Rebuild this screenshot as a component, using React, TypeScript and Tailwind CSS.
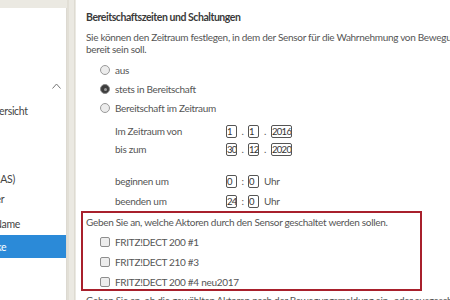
import React from "react";

const font = { fontFamily: "Lato, 'Noto Sans', sans-serif" };

function Radio({ checked }: { checked?: boolean }) {
  return checked ? (
    <span className="w-[10px] h-[10px] shrink-0 rounded-full bg-[#3d3d3d] border border-[#8a8a8a] flex items-center justify-center">
      <span className="w-[3px] h-[3px] rounded-full bg-[#9a9a9a]" />
    </span>
  ) : (
    <span className="w-[10px] h-[10px] shrink-0 rounded-full border border-[#9a9a9a] bg-[#ececec]" />
  );
}

function Check() {
  return <span className="w-[10px] h-[10px] shrink-0 rounded-[2px] border border-[#8e8e8e] bg-[#ededed]" />;
}

function Box({ v, w = "w-[11px]" }: { v: string; w?: string }) {
  return (
    <span className={`${w} h-[13px] shrink-0 overflow-hidden border border-[#555] rounded-[2px] text-[9.5px] leading-[11px] tracking-[-0.7px] text-[#333] bg-white`}>
      {v}
    </span>
  );
}

function Row({ label, children, mt }: { label: string; children: React.ReactNode; mt: string }) {
  return (
    <div className={`flex items-center h-[14px] ${mt}`}>
      <span className="w-[140px] shrink-0 pl-[29px] text-[#555]">{label}</span>
      <div className="flex items-center">{children}</div>
    </div>
  );
}

export default function App() {
  return (
    <div className="w-[450px] h-[300px] overflow-hidden bg-[#ebe9e2] flex text-[10px] leading-[12px] tracking-[-0.3px]" style={font}>
      {/* sidebar */}
      <div className="w-[66px] shrink-0 mt-[8px] bg-white overflow-hidden flex flex-col whitespace-nowrap text-[10.5px] text-[#444] shadow-[1px_0_0_#dcd9d1]">
        <div className="h-[75px] shrink-0" />
        <div className="h-[10px] shrink-0 flex justify-end pr-[5px]">
          <svg width="9" height="6" viewBox="0 0 9 6">
            <path d="M0.5 5.5 L4.5 1 L8.5 5.5" fill="none" stroke="#777" strokeWidth="1" />
          </svg>
        </div>
        <div className="h-[12px] shrink-0" />
        <div className="h-[12px] shrink-0 leading-[12px] ml-[-14px]">Übersicht</div>
        <div className="h-[56px] shrink-0" />
        <div className="h-[12px] shrink-0 leading-[12px] ml-[-10px]">(NAS)</div>
        <div className="h-[8px] shrink-0" />
        <div className="h-[12px] shrink-0 leading-[12px] ml-[-33px]">Speicher</div>
        <div className="h-[13px] shrink-0" />
        <div className="h-[12px] shrink-0 leading-[12px] ml-[-6px]">Name</div>
        <div className="h-[5px] shrink-0" />
        <div className="h-[23px] shrink-0 bg-[#2b8ad8] text-white flex items-center">
          <span className="ml-[-44px]">Regelwerke</span>
        </div>
      </div>
      <div className="w-[10px] shrink-0 flex">
        <div className="w-[2px] bg-[#e2dfd6] ml-[1px]" />
        <div className="w-[5px]" />
        <div className="w-[1px] bg-[#dedbd2]" />
      </div>
      {/* content */}
      <div className="flex-1 min-w-0 overflow-hidden bg-white pl-[10px] pt-[11px] whitespace-nowrap text-[#555]">
        <div className="font-bold text-[#3a3a3a] text-[10.5px] tracking-[-0.45px] h-[12px]">Bereitschaftszeiten und Schaltungen</div>
        <div className="mt-[8px]">Sie können den Zeitraum festlegen, in dem der Sensor für die Wahrnehmung von Bewegungen</div>
        <div>bereit sein soll.</div>
        <div className="flex items-center gap-[5px] ml-[14px] mt-[9px] h-[12px]">
          <Radio /> <span>aus</span>
        </div>
        <div className="flex items-center gap-[5px] ml-[14px] mt-[7px] h-[12px]">
          <Radio checked /> <span>stets in Bereitschaft</span>
        </div>
        <div className="flex items-center gap-[5px] ml-[14px] mt-[7px] h-[12px]">
          <Radio /> <span>Bereitschaft im Zeitraum</span>
        </div>
        <Row label="Im Zeitraum von" mt="mt-[10px]">
          <Box v="1" /><span className="w-[11px] text-center">.</span><Box v="1" /><span className="w-[12px] text-center">.</span><Box v="2016" w="w-[21px]" />
        </Row>
        <Row label="bis zum" mt="mt-[4px]">
          <Box v="30" /><span className="w-[11px] text-center">.</span><Box v="12" /><span className="w-[12px] text-center">.</span><Box v="2020" w="w-[21px]" />
        </Row>
        <Row label="beginnen um" mt="mt-[18px]">
          <Box v="0" /><span className="w-[11px] text-center">:</span><Box v="0" /><span className="ml-[5px]">Uhr</span>
        </Row>
        <Row label="beenden um" mt="mt-[6px]">
          <Box v="24" /><span className="w-[11px] text-center">:</span><Box v="0" /><span className="ml-[5px]">Uhr</span>
        </Row>
        <div className="ml-[-5px] w-[341px] h-[80px] mt-[3px] border-[2px] border-[#a8202c] pl-[3px] pt-[3px]">
          <div>Geben Sie an, welche Aktoren durch den Sensor geschaltet werden sollen.</div>
          <div className="flex items-center gap-[5px] ml-[14px] mt-[8px] h-[12px]">
            <Check /> <span>FRITZ!DECT 200 #1</span>
          </div>
          <div className="flex items-center gap-[5px] ml-[14px] mt-[8px] h-[12px]">
            <Check /> <span>FRITZ!DECT 210 #3</span>
          </div>
          <div className="flex items-center gap-[5px] ml-[14px] mt-[8px] h-[12px]">
            <Check /> <span>FRITZ!DECT 200 #4 neu2017</span>
          </div>
        </div>
        <div className="mt-[3px]">Geben Sie an, ob die gewählten Aktoren nach der Bewegungsmeldung ein- oder ausgeschaltet werden sollen.</div>
      </div>
    </div>
  );
}
